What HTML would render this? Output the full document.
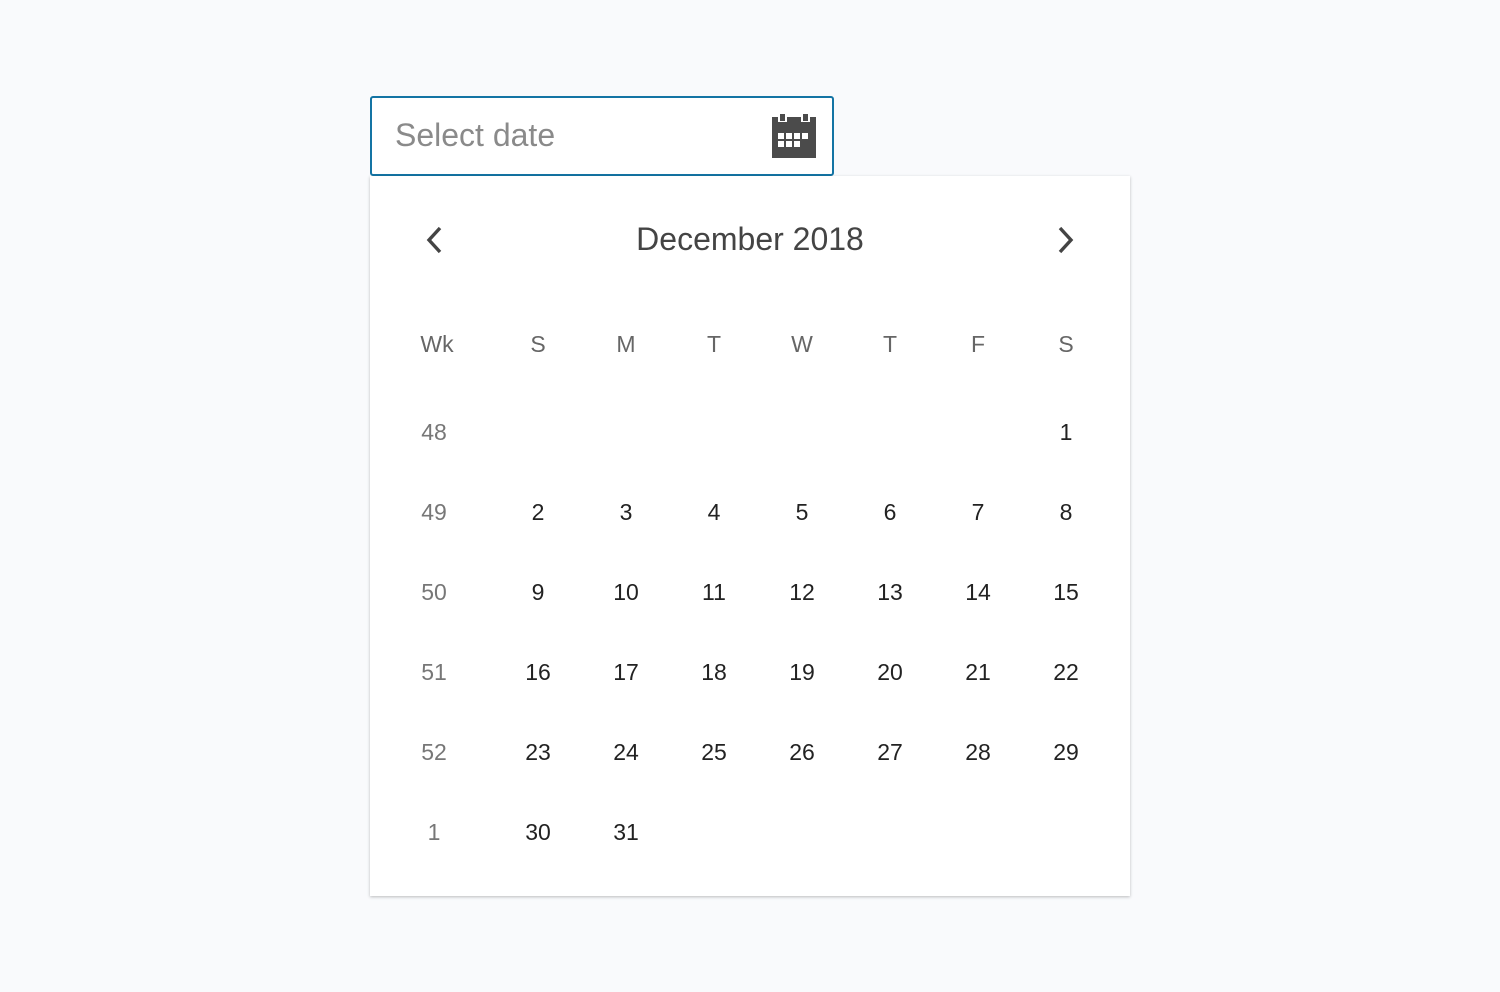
<!DOCTYPE html>
<html><head><style>
body{margin:0;width:1500px;height:992px;background:#f9fafc;font-family:"Liberation Sans",sans-serif;position:relative;overflow:hidden}
.inp{position:absolute;left:370px;top:96px;width:460px;height:76px;border:2px solid #1474a4;border-radius:3px;background:#fff}
.inp span{position:absolute;left:23px;top:19px;font-size:32px;color:#8a8a8a}
.pan{position:absolute;left:370px;top:176px;width:760px;height:720px;background:#fff;box-shadow:0 1px 3px rgba(0,0,0,.25)}
.t{position:absolute;transform:translateX(-50%);white-space:nowrap}
.h{font-size:32px;color:#444;top:45px}
.d{font-size:23px;color:#222}
.w{font-size:23px;color:#777}
.dn{font-size:23px;color:#666}
</style></head><body>
<div class="inp"><span>Select date</span>
<svg style="position:absolute;left:400px;top:14px" width="46" height="46" viewBox="772 112 46 46">
<rect x="772" y="117" width="44" height="41" fill="#4b4b4b"/>
<rect x="778" y="117" width="9" height="5" fill="#fff"/><rect x="801" y="117" width="9" height="5" fill="#fff"/>
<rect x="780" y="114" width="5" height="7" fill="#4b4b4b"/><rect x="803" y="114" width="5" height="7" fill="#4b4b4b"/>
<g fill="#fff"><rect x="778" y="133" width="6" height="6"/><rect x="786" y="133" width="6" height="6"/><rect x="794" y="133" width="6" height="6"/><rect x="802" y="133" width="6" height="6"/>
<rect x="778" y="141" width="6" height="6"/><rect x="786" y="141" width="6" height="6"/><rect x="794" y="141" width="6" height="6"/></g>
</svg></div>
<div class="pan">
<svg style="position:absolute;left:52px;top:48px" width="24" height="34"><path d="M18 4 L7 16 L18 28" stroke="#444" stroke-width="3.4" fill="none"/></svg>
<svg style="position:absolute;left:684px;top:48px" width="24" height="34"><path d="M6 4 L17 16 L6 28" stroke="#444" stroke-width="3.4" fill="none"/></svg>
<div class="t h" style="left:380px">December 2018</div>
<div id="g"></div>
</div>
<script>
var xs=[63,167,255,343,431,519,607,695];
var p=document.querySelector('.pan'),h='';
var hd=['Wk','S','M','T','W','T','F','S'];
hd.forEach(function(s,i){h+='<div class="t dn" style="left:'+(i?xs[i]+1:67)+'px;top:155px">'+s+'</div>'});
var rows=[[48,'','','','','','',1],[49,2,3,4,5,6,7,8],[50,9,10,11,12,13,14,15],[51,16,17,18,19,20,21,22],[52,23,24,25,26,27,28,29],[1,30,31,'','','','','']];
rows.forEach(function(r,ri){r.forEach(function(v,i){if(v!=='')h+='<div class="t '+(i?'d':'w')+'" style="left:'+(xs[i]+1)+'px;top:'+(243+ri*80)+'px">'+v+'</div>'})});
p.insertAdjacentHTML('beforeend',h);
</script>
</body></html>
